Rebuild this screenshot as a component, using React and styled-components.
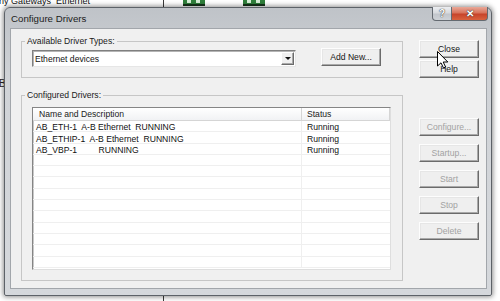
import React from "react";
import styled, { createGlobalStyle } from "styled-components";

const GlobalStyle = createGlobalStyle`
  html, body {
    margin: 0;
    padding: 0;
    background: #fff;
  }
  body {
    font-family: "Liberation Sans", Arial, sans-serif;
  }
  * {
    box-sizing: border-box;
  }
`;

const drivers = [
  { name: "AB_ETH-1  A-B Ethernet  RUNNING", status: "Running" },
  { name: "AB_ETHIP-1  A-B Ethernet  RUNNING", status: "Running" },
  { name: "AB_VBP-1         RUNNING", status: "Running" },
];

const ROW_COUNT = 13;

const Desktop = styled.div`
  position: relative;
  width: 500px;
  height: 301px;
  overflow: hidden;
  background: #fff;
`;

/* the application behind the dialog */
const BackApp = styled.div`
  display: grid;
  grid-template-columns: 164px 1fr;
  height: 100%;
`;

const BackPane = styled.div`
  display: flex;
  flex-direction: column;
  border-right: ${(p) => (p.$divider ? "1px solid #3a3a3a" : "none")};
`;

const BackCaption = styled.div`
  margin: -4px 0 0 -1px;
  font-size: 9px;
  line-height: 10px;
  color: #111;
  white-space: pre;
`;

const BackLetter = styled.div`
  margin: 72px 0 0 -1px;
  font-size: 10px;
  line-height: 12px;
  color: #222;
`;

const IconRow = styled.div`
  display: flex;
  gap: 38px;
  padding-left: 19px;
`;

/* dialog window */
const Window = styled.div`
  position: absolute;
  left: 4px;
  top: 7px;
  width: 488px;
  height: 289px;
  display: flex;
  flex-direction: column;
  border: 1px solid #5d6268;
  border-radius: 6px 6px 2px 2px;
  background: linear-gradient(180deg, #bfc3c8 0%, #d0d3d7 25%, #d5d8dc 100%);
  box-shadow: 0 0 5px 1px rgba(0, 0, 0, 0.45);
`;

const TitleBar = styled.div`
  display: flex;
  align-items: flex-start;
  height: 20px;
  padding: 0 3px 0 6px;
`;

const Title = styled.div`
  align-self: center;
  font-size: 9.7px;
  color: #1c1c1c;
`;

const CaptionButtons = styled.div`
  display: flex;
  margin: -1px 0 0 auto;
`;

const CaptionButton = styled.div`
  width: ${(p) => p.$w}px;
  height: 14px;
  display: flex;
  align-items: center;
  justify-content: center;
  border: 1px solid #646a71;
  border-top: none;
  border-left: ${(p) => (p.$close ? "none" : "1px solid #646a71")};
  border-radius: ${(p) => (p.$close ? "0 0 4px 0" : "0 0 0 4px")};
  background: ${(p) =>
    p.$close
      ? "linear-gradient(180deg, #e9a898 0%, #d8735b 45%, #c7442a 55%, #d9623e 100%)"
      : "linear-gradient(180deg, #eceef1 0%, #d7dade 45%, #c2c6cc 55%, #ced2d7 100%)"};
  color: #fff;
  font-size: ${(p) => (p.$close ? "10px" : "10px")};
  font-weight: bold;
  text-shadow: 0 0 1px #333, 0 0 1px #333;
`;

const Client = styled.div`
  flex: 1;
  margin: 0 4px 6px 5px;
  border: 1px solid #a2a6ab;
  background: #f0f0f0;
  display: grid;
  grid-template-columns: 382px 60px;
  column-gap: 16px;
  align-items: start;
  padding: 6px 0 0 10px;
`;

const LeftColumn = styled.div`
  display: flex;
  flex-direction: column;
  gap: 11px;
`;

const RightColumn = styled.div`
  display: flex;
  flex-direction: column;
  padding-top: 5px;
`;

const GroupBox = styled.fieldset`
  margin: 0;
  min-width: 0;
  border: 1px solid #c6c6c6;
  padding: ${(p) => p.$pad};
`;

const GroupLabel = styled.legend`
  margin-left: -7px;
  padding: 0 2px;
  font-size: 8.6px;
  line-height: 12px;
  color: #1a1a1a;
`;

const TypeRow = styled.div`
  display: flex;
  align-items: flex-start;
  gap: 25px;
`;

const Combo = styled.div`
  width: 264px;
  height: 17px;
  margin-top: 2px;
  display: flex;
  align-items: center;
  justify-content: space-between;
  background: #fff;
  border: 1px solid;
  border-color: #7f7f7f #e6e6e6 #e6e6e6 #7f7f7f;
  box-shadow: inset 1px 1px 0 #b4b4b4;
  padding: 0 1px 0 2px;
  font-size: 8.6px;
  color: #111;
`;

const DropButton = styled.div`
  width: 13px;
  height: 13px;
  display: flex;
  align-items: center;
  justify-content: center;
  background: #f0f0f0;
  border: 1px solid;
  border-color: #fff #6b6b6b #6b6b6b #fff;
  box-shadow: inset -1px -1px 0 #a9a9a9;
`;

const Arrow = styled.div`
  width: 0;
  height: 0;
  border-left: 3px solid transparent;
  border-right: 3px solid transparent;
  border-top: 3px solid #111;
`;

const Button = styled.div`
  width: 60px;
  height: 18px;
  margin-top: ${(p) => p.$top || 0}px;
  display: flex;
  align-items: center;
  justify-content: center;
  background: #efefef;
  border: 1px solid;
  border-color: #fdfdfd #6b6b6b #6b6b6b #fdfdfd;
  box-shadow: inset -1px -1px 0 #a9a9a9, inset 1px 1px 0 #e6e6e6;
  font-size: 8.6px;
  color: ${(p) => (p.$disabled ? "#a2a2a2" : "#161616")};
`;

const ListView = styled.div`
  width: 359px;
  height: 163px;
  display: flex;
  flex-direction: column;
  background: #fff;
  border: 1px solid;
  border-color: #858585 #dedede #dedede #858585;
  box-shadow: inset 1px 1px 0 #c8c8c8;
  overflow: hidden;
`;

const HeaderRow = styled.div`
  display: grid;
  grid-template-columns: 269px 88px;
  height: 13px;
  background: linear-gradient(180deg, #ffffff 0%, #f1f2f4 100%);
  border-bottom: 1px solid #d5d5d5;
  flex-shrink: 0;
`;

const HeaderCell = styled.div`
  border-right: 1px solid #d5d5d5;
  padding-left: ${(p) => p.$pad}px;
  font-size: 8.6px;
  line-height: 12px;
  color: #1a1a1a;
`;

const Rows = styled.div`
  display: flex;
  flex-direction: column;
`;

const Row = styled.div`
  display: grid;
  grid-template-columns: 269px 88px;
  height: 11.3px;
  flex-shrink: 0;
  border-bottom: 1px solid #efefef;
`;

const Cell = styled.div`
  padding: 2.4px 0 0 ${(p) => p.$pad}px;
  border-right: ${(p) => (p.$first ? "1px solid #efefef" : "none")};
  font-size: 8.6px;
  line-height: 9px;
  color: #111;
  white-space: pre;
`;

const Cursor = styled.svg`
  position: absolute;
  left: 437px;
  top: 51px;
`;

function NetIcon() {
  return (
    <svg width="22" height="6" viewBox="0 0 22 6">
      <rect x="0" y="0" width="22" height="5" fill="#2f7f3b" />
      <rect x="0" y="4" width="22" height="2" fill="#16331b" />
      <rect x="4" y="0" width="4" height="3" fill="#d9efd9" />
      <rect x="13" y="0" width="4" height="3" fill="#d9efd9" />
    </svg>
  );
}

export default function App() {
  const rows = Array.from({ length: ROW_COUNT }, (_, i) => drivers[i] || null);

  return (
    <>
      <GlobalStyle />
      <Desktop>
        <BackApp>
          <BackPane $divider>
            <BackCaption>ny Gateways  Ethernet</BackCaption>
            <BackLetter>B</BackLetter>
          </BackPane>
          <BackPane>
            <IconRow>
              <NetIcon />
              <NetIcon />
            </IconRow>
          </BackPane>
        </BackApp>

        <Window>
          <TitleBar>
            <Title>Configure Drivers</Title>
            <CaptionButtons>
              <CaptionButton $w={20}>?</CaptionButton>
              <CaptionButton $w={36} $close>
                ✕
              </CaptionButton>
            </CaptionButtons>
          </TitleBar>

          <Client>
            <LeftColumn>
              <GroupBox $pad="1px 11px 10px 10px">
                <GroupLabel>Available Driver Types:</GroupLabel>
                <TypeRow>
                  <Combo>
                    <span>Ethernet devices</span>
                    <DropButton>
                      <Arrow />
                    </DropButton>
                  </Combo>
                  <Button>Add New...</Button>
                </TypeRow>
              </GroupBox>

              <GroupBox $pad="6px 11px 10px 10px">
                <GroupLabel>Configured Drivers:</GroupLabel>
                <ListView>
                  <HeaderRow>
                    <HeaderCell $pad={6}>Name and Description</HeaderCell>
                    <HeaderCell $pad={5}>Status</HeaderCell>
                  </HeaderRow>
                  <Rows>
                    {rows.map((row, i) => (
                      <Row key={i}>
                        <Cell $first $pad={3}>
                          {row ? row.name : ""}
                        </Cell>
                        <Cell $pad={5}>{row ? row.status : ""}</Cell>
                      </Row>
                    ))}
                  </Rows>
                </ListView>
              </GroupBox>
            </LeftColumn>

            <RightColumn>
              <Button>Close</Button>
              <Button $top={2}>Help</Button>
              <Button $top={40} $disabled>
                Configure...
              </Button>
              <Button $top={8} $disabled>
                Startup...
              </Button>
              <Button $top={8} $disabled>
                Start
              </Button>
              <Button $top={8} $disabled>
                Stop
              </Button>
              <Button $top={8} $disabled>
                Delete
              </Button>
            </RightColumn>
          </Client>
        </Window>

        <Cursor width="12" height="18" viewBox="0 0 12 18">
          <path
            d="M0.5 0.5 L0.5 15 L4 11.8 L6.5 17 L8.6 16 L6.2 11 L10.8 11 Z"
            fill="#fff"
            stroke="#000"
            strokeWidth="1"
            strokeLinejoin="round"
          />
        </Cursor>
      </Desktop>
    </>
  );
}
